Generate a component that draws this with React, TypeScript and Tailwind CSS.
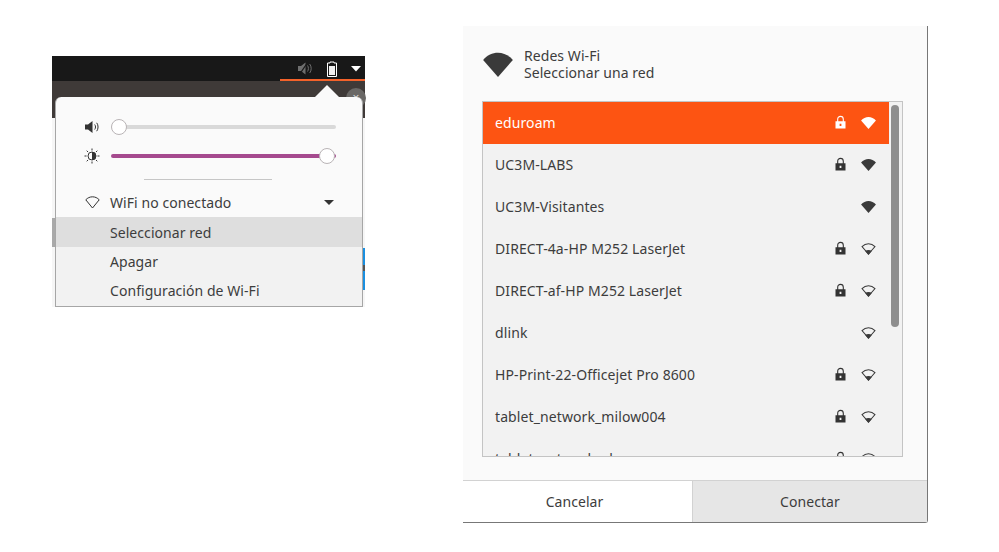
import React from 'react';

const fan = 'M8 14 L0 4.8 C2.2 2.4 5 1 8 1 S13.8 2.4 16 4.8 Z';

function WifiFull({ className }: { className: string }) {
  return (
    <svg viewBox="0 0 16 14" className={className} fill="currentColor">
      <path d={fan} />
    </svg>
  );
}

function WifiEmpty({ className }: { className: string }) {
  return (
    <svg viewBox="0 0 16 14" className={className} fill="none">
      <path d="M8 13 L1 5 C3 3 5.3 2 8 2 S13 3 15 5 Z" stroke="currentColor" strokeWidth="1.1" />
      <path d="M8 14 L4.4 9.7 C5.5 9 6.7 8.6 8 8.6 S10.5 9 11.6 9.7 Z" fill="currentColor" />
    </svg>
  );
}

function Lock({ className }: { className: string }) {
  return (
    <svg viewBox="0 0 11 14" className={className}>
      <path d="M2.7 7 V4.2 C2.7 2.5 3.9 1.4 5.5 1.4 S8.3 2.5 8.3 4.2 V7" fill="none" stroke="currentColor" strokeWidth="1.1" />
      <path fillRule="evenodd" fill="currentColor" d="M0.5 6.3 H10.5 V13.5 H0.5 Z M4.6 8.8 V11 H6.4 V8.8 Z" />
    </svg>
  );
}

function SpeakerIcon() {
  return (
    <svg viewBox="0 0 16 14" className="w-4 h-[14px] text-[#333]">
      <path d="M1 4.5 H4 L8.5 1 V13 L4 9.5 H1 Z" fill="currentColor" />
      <path d="M10.7 4.5 C11.8 6 11.8 8 10.7 9.5 M12.7 2.8 C14.5 5 14.5 9 12.7 11.2" fill="none" stroke="currentColor" strokeWidth="1" />
    </svg>
  );
}

function BrightnessIcon() {
  return (
    <svg viewBox="0 0 16 16" className="w-4 h-4 text-[#333]">
      <circle cx="8" cy="8" r="4" fill="none" stroke="currentColor" strokeWidth="1" />
      <path d="M8 4 A4 4 0 0 1 8 12 Z" fill="currentColor" />
      <path
        d="M8 0.5 V2.5 M8 13.5 V15.5 M0.5 8 H2.5 M13.5 8 H15.5 M2.7 2.7 L4.1 4.1 M11.9 11.9 L13.3 13.3 M2.7 13.3 L4.1 11.9 M11.9 4.1 L13.3 2.7"
        stroke="currentColor"
        strokeWidth="1"
      />
    </svg>
  );
}

function Knob() {
  return <div className="w-4 h-4 rounded-full bg-white border border-[#b9b4b6] shrink-0" />;
}

function WifiOutline() {
  return (
    <svg viewBox="0 0 15 13" className="w-[15px] h-[13px] text-[#333]" fill="none">
      <path d="M7.5 12 L0.8 3.8 C2.6 1.9 4.9 0.8 7.5 0.8 S12.4 1.9 14.2 3.8 Z" stroke="currentColor" strokeWidth="1" />
    </svg>
  );
}

function QuickMenu() {
  return (
    <div className="relative w-[313px] h-[251px] shrink-0 bg-[#f6f6f6]">
      {/* lo que asoma detras del menu */}
      <div className="h-[25px] bg-[#181818] flex items-center justify-end pr-[4px]">
        <svg viewBox="0 0 16 15" className="w-4 h-[15px] text-[#6e6e6e]">
          <path d="M1 5 H4 L8.5 1.5 V13.5 L4 10 H1 Z" fill="currentColor" />
          <path d="M10.5 4.5 C11.7 6 11.7 9 10.5 10.5 M12.7 3 C14.7 5.5 14.7 9.5 12.7 12" fill="none" stroke="currentColor" strokeWidth="1" />
          <path d="M11 1 L2 14" stroke="#181818" strokeWidth="1.3" />
        </svg>
        <svg viewBox="0 0 10 16" className="w-[10px] h-4 ml-[14px] mr-[14px] text-white">
          <path d="M3 1 H7 V2 H9.5 V15.5 H0.5 V2 H3 Z" fill="none" stroke="currentColor" strokeWidth="1" />
          <rect x="2" y="5" width="6" height="9" fill="#f0f0f0" />
        </svg>
        <svg viewBox="0 0 10 6" className="w-[10px] h-[6px] text-white">
          <path d="M0 0 H10 L5 5.5 Z" fill="currentColor" />
        </svg>
      </div>
      <div className="h-[37px] bg-[#3f3a38]" />
      <div className="absolute right-0 top-[23px] w-[85px] h-[2px] bg-[#f4622a]" />
      <div className="absolute right-[-1px] top-[32px] w-[20px] h-[20px] rounded-full bg-[#6a6866] overflow-hidden flex items-center justify-center text-[12px] leading-none text-[#ddd] font-['Noto_Sans',sans-serif]">
        ×
      </div>
      <div className="absolute left-0 top-[162px] w-[3px] h-[29px] bg-[#a9a9a9]" />
      <div className="absolute right-0 top-[192px] w-[2px] h-[42px] bg-[#1a8fe0]" />
      <div className="absolute right-0 top-[209px] w-[2px] h-[6px] bg-[#555]" />

      {/* flecha del popover */}
      <svg viewBox="0 0 24 12" className="absolute left-[263px] top-[29px] w-6 h-3 text-[#fafafa]">
        <path d="M0 12 L12 0 L24 12 Z" fill="currentColor" />
      </svg>

      <div className="absolute left-[3px] top-[41px] w-[308px] h-[210px] bg-[#fafafa] rounded-t-md border-x border-b border-[#a6a6a6] flex flex-col font-['Noto_Sans',sans-serif] text-[14px] leading-[19px] tracking-[0.06px] text-[#3d3d3d]">
        <div className="pl-[28px] pr-[26px] pt-[22px] flex items-center gap-[11px]">
          <SpeakerIcon />
          <div className="relative flex-1 h-4 flex items-center">
            <div className="w-full h-1 rounded-full bg-[#d9d9d9]" />
            <div className="absolute left-0 top-0">
              <Knob />
            </div>
          </div>
        </div>
        <div className="pl-[28px] pr-[26px] mt-[13px] flex items-center gap-[11px]">
          <BrightnessIcon />
          <div className="relative flex-1 h-4 flex items-center">
            <div className="w-full h-1 rounded-full bg-[#a54a8e]" />
            <div className="absolute right-[1px] top-0">
              <Knob />
            </div>
          </div>
        </div>
        <div className="ml-[88px] mt-[15px] w-[128px] h-px bg-[#c6c6c6]" />
        <div className="flex items-center pl-[29px] pr-[28px] pt-[7px] h-[37px] gap-[10px]">
          <WifiOutline />
          <span className="flex-1">WiFi no conectado</span>
          <svg viewBox="0 0 10 5" className="w-[10px] h-[5px] text-[#333]">
            <path d="M0 0 H10 L5 5 Z" fill="currentColor" />
          </svg>
        </div>
        <div className="flex-1 flex flex-col bg-[#f2f2f2]">
          <div className="h-[30px] bg-[#dedede] pl-[54px] flex items-center">Seleccionar red</div>
          <div className="h-[29px] pl-[54px] flex items-center">Apagar</div>
          <div className="h-[29px] pl-[54px] flex items-center">Configuración de Wi-Fi</div>
        </div>
      </div>
    </div>
  );
}

const redes = [
  { nombre: 'eduroam', lock: true, full: true, active: true },
  { nombre: 'UC3M-LABS', lock: true, full: true },
  { nombre: 'UC3M-Visitantes', lock: false, full: true },
  { nombre: 'DIRECT-4a-HP M252 LaserJet', lock: true, full: false },
  { nombre: 'DIRECT-af-HP M252 LaserJet', lock: true, full: false },
  { nombre: 'dlink', lock: false, full: false },
  { nombre: 'HP-Print-22-Officejet Pro 8600', lock: true, full: false },
  { nombre: 'tablet_network_milow004', lock: true, full: false },
  { nombre: 'tablet_network_aku', lock: true, full: false },
];

function WifiDialog() {
  return (
    <div className="w-[465px] h-[497px] shrink-0 bg-[#fafafa] border-r border-b border-[#777] rounded-br-[3px] flex flex-col font-['Noto_Sans',sans-serif] text-[14px] leading-[17px] tracking-[0.06px] text-[#3d3d3d]">
      <div className="flex items-center h-[75px] pl-[20px] pt-[1px] gap-[11px]">
        <WifiFull className="w-[30px] h-[26px] text-[#3a3a3a]" />
        <div>
          <div>Redes Wi-Fi</div>
          <div>Seleccionar una red</div>
        </div>
      </div>
      <div className="relative ml-[19px] w-[421px] h-[356px] border border-[#c4c4c4] bg-[#f2f2f2] overflow-hidden tracking-[0.1px]">
        {redes.map((r) => (
          <div
            key={r.nombre}
            className={`flex items-center w-[406px] h-[42px] pl-[12px] pr-[13px] pb-[2px] ${r.active ? 'bg-[#fd5412] text-white' : ''}`}
          >
            <span className="flex-1">{r.nombre}</span>
            {r.lock && <Lock className={`w-[11px] h-[14px] mr-[15px] ${r.active ? 'text-white' : 'text-[#333]'}`} />}
            {r.full ? (
              <WifiFull className={`w-[15px] h-[13px] ${r.active ? 'text-white' : 'text-[#3a3a3a]'}`} />
            ) : (
              <WifiEmpty className="w-[15px] h-[13px] text-[#3a3a3a]" />
            )}
          </div>
        ))}
        {/* scrollbar */}
        <div className="absolute right-[3px] top-[3px] w-2 h-[222px] rounded-full bg-[#8e8e8e]" />
      </div>
      <div className="mt-auto flex h-[42px] border-t border-[#d2d2d2]">
        <div className="w-[229px] bg-white pr-[6px] flex items-center justify-center">Cancelar</div>
        <div className="flex-1 bg-[#e6e6e6] border-l border-[#d2d2d2] flex items-center justify-center">Conectar</div>
      </div>
    </div>
  );
}

export default function App() {
  return (
    <div className="w-[999px] h-[552px] bg-white flex items-start">
      <div className="ml-[52px] mt-[56px]">
        <QuickMenu />
      </div>
      <div className="ml-[98px] mt-[26px]">
        <WifiDialog />
      </div>
    </div>
  );
}
